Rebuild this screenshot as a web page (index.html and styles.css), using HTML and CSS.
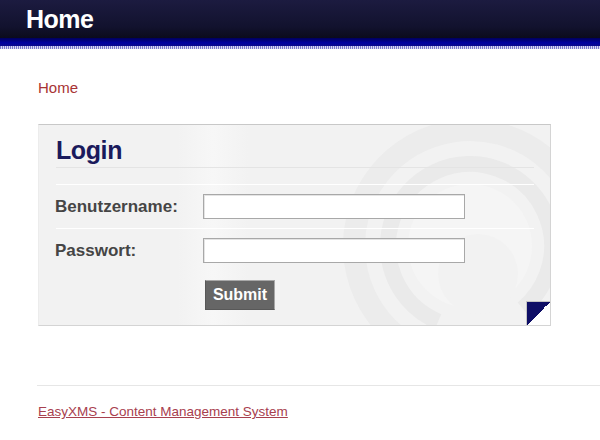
FILE: index.html
```html
<!DOCTYPE html>
<html lang="de">
<head>
    <meta charset="UTF-8">
    <meta name="viewport" content="width=device-width, initial-scale=1.0">
    <title>Home</title>
    <link rel="stylesheet" href="styles.css">
</head>
<body>
    <header class="top-bar">
        <h1>Home</h1>
    </header>
    <div class="top-band"></div>
    <div class="top-dots"></div>

    <main class="content">
        <!-- Breadcrumb -->
        <div class="breadcrumb">Home</div>

        <!-- Login Box -->
        <div class="login-box">
            <svg class="swirl" width="513" height="202" viewBox="0 0 513 202" aria-hidden="true">
                <defs>
                    <linearGradient id="band" x1="0" x2="1" y1="0" y2="0">
                        <stop offset="0" stop-color="#f2f2f2"/>
                        <stop offset="0.5" stop-color="#f7f7f7"/>
                        <stop offset="1" stop-color="#f2f2f2"/>
                    </linearGradient>
                </defs>
                <rect x="140" y="0" width="70" height="202" fill="url(#band)"/>
                <circle cx="432" cy="122" r="116" fill="none" stroke="#ececec" stroke-width="22" stroke-dasharray="420 120" transform="rotate(150 432 122)"/>
                <circle cx="432" cy="122" r="82" fill="none" stroke="#eaeaea" stroke-width="16" stroke-dasharray="300 90" transform="rotate(200 432 122)"/>
                <circle cx="432" cy="122" r="62" fill="#f5f5f5"/>
                <circle cx="440" cy="150" r="40" fill="#f2f2f2"/>
            </svg>

            <form class="login-form" onsubmit="return false;">
                <h2>Login</h2>

                <div class="form-row first">
                    <label for="username">Benutzername:</label>
                    <input type="text" id="username" name="username">
                </div>

                <div class="form-row last">
                    <label for="password">Passwort:</label>
                    <input type="password" id="password" name="password">
                </div>

                <div class="submit-row">
                    <button type="submit" class="submit-btn">Submit</button>
                </div>
            </form>

            <div class="fold"></div>
        </div>
    </main>

    <footer class="footer">
        <a href="#">EasyXMS - Content Management System</a>
    </footer>
</body>
</html>
```

FILE: styles.css
```css
body {
    font-family: "Liberation Sans", Arial, sans-serif;
    margin: 0;
    padding: 0;
    background-color: #ffffff;
}

.top-bar {
    height: 38px;
    padding-left: 26px;
    background: linear-gradient(to bottom, #1c1b40, #12122e 70%, #0b0b1c);
}

.top-bar h1 {
    margin: 0;
    color: #ffffff;
    font-size: 25px;
    line-height: 38px;
    letter-spacing: -0.5px;
}

.top-band {
    height: 8px;
    background: linear-gradient(to bottom, #00005a, #0000a0 60%, #0a0a8c);
}

.top-dots {
    height: 3px;
    background: repeating-linear-gradient(to right, #7a7acc 0, #7a7acc 1px, #d8d8f2 1px, #d8d8f2 2px);
}

.content {
    padding: 30px 38px 0 38px;
}

.breadcrumb {
    color: #a83333;
    font-size: 15px;
    line-height: 18px;
}

.login-box {
    position: relative;
    margin-top: 27px;
    width: 511px;
    height: 200px;
    background-color: #f2f2f2;
    border: 1px solid #d4d4d4;
    border-top-color: #c8c8c8;
    border-left-color: #ececec;
    overflow: hidden;
}

.swirl {
    position: absolute;
    left: -1px;
    top: -1px;
}

.login-form {
    position: relative;
    padding: 10px 16px 0 17px;
}

.login-form h2 {
    margin: 0;
    color: #1a1a5c;
    font-size: 25px;
    line-height: 30px;
    letter-spacing: -0.4px;
    padding-bottom: 2px;
    border-bottom: 1px solid #e4e4e4;
}

.form-row {
    display: grid;
    grid-template-columns: 147px 262px;
    align-items: center;
    padding: 9px 0;
    border-bottom: 1px solid #ffffff;
}

.form-row.first {
    margin-top: 16px;
    border-top: 1px solid #ffffff;
}

.form-row.last {
    border-bottom: none;
    padding-bottom: 8px;
}

.form-row label {
    color: #454545;
    font-weight: bold;
    font-size: 17px;
    margin-left: -1px;
}

.form-row input {
    box-sizing: border-box;
    width: 262px;
    height: 25px;
    margin: 0;
    background-color: #ffffff;
    border: 1px solid #a8a8a8;
    box-shadow: inset 1px 1px 0 #e4e4e4;
}

.submit-row {
    padding: 9px 0 0 149px;
}

.submit-btn {
    box-sizing: border-box;
    width: 70px;
    height: 30px;
    padding: 0;
    background-color: #666666;
    color: #ffffff;
    font-family: "Liberation Sans", Arial, sans-serif;
    font-weight: bold;
    font-size: 16px;
    border: 1px solid;
    border-color: #a8a8a8 #a8a8a8 #585858 #585858;
    cursor: pointer;
}

.fold {
    position: absolute;
    right: 0;
    bottom: 0;
    width: 23px;
    height: 23px;
    border-top: 1px solid #c4c4c4;
    border-left: 1px solid #c4c4c4;
    background: linear-gradient(to bottom right, #0e0e66 50%, #ffffff 50%);
}

.footer {
    margin: 59px 0 0 37px;
    padding: 16px 0 0 1px;
    border-top: 1px solid #e6e6e6;
}

.footer a {
    color: #a8404e;
    font-size: 13.5px;
    line-height: 16px;
}
```
